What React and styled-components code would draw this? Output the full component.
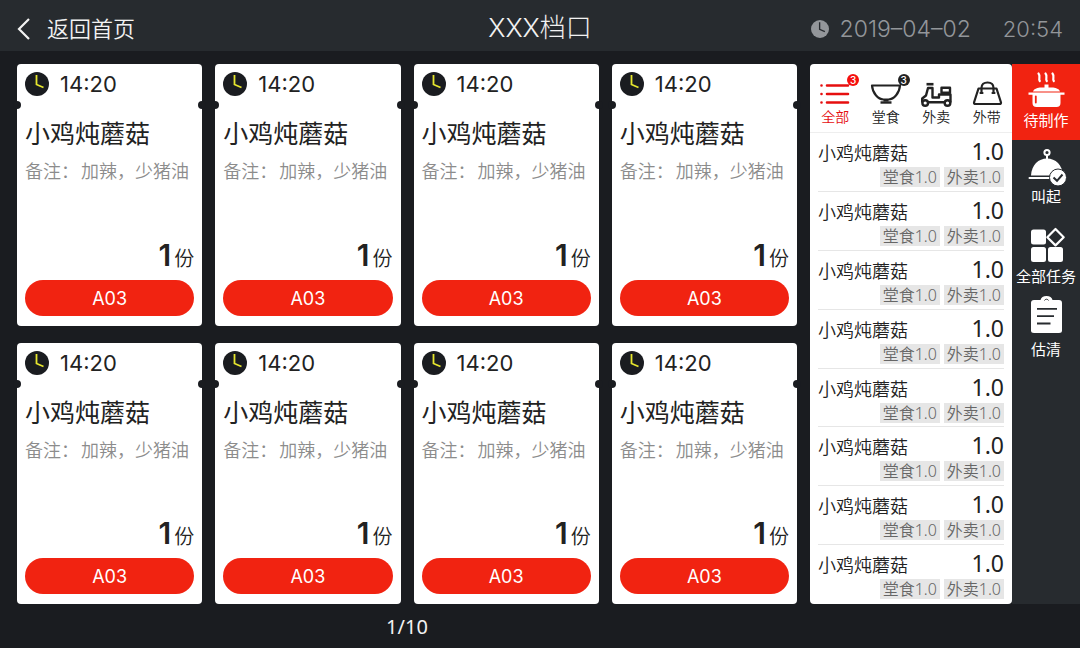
import React from "react";
import styled, { createGlobalStyle } from "styled-components";

const orders = Array.from({ length: 8 }, (_, i) => ({
  id: i,
  time: "14:20",
  dish: "小鸡炖蘑菇",
  remark: "加辣，少猪油",
  count: 1,
  table: "A03",
}));

const summary = Array.from({ length: 8 }, (_, i) => ({
  id: i,
  dish: "小鸡炖蘑菇",
  total: "1.0",
  tags: ["堂食1.0", "外卖1.0"],
}));

const ListIcon = () => (
  <svg width="34" height="28" viewBox="0 0 34 28" stroke="currentColor" strokeWidth="2.6" strokeLinecap="round">
    <path d="M9 5.5H30M9 14H30M9 22.5H30" />
    <path d="M3.5 5.5h.01M3.5 14h.01M3.5 22.5h.01" />
  </svg>
);

const BowlIcon = () => (
  <svg width="34" height="28" viewBox="0 0 34 28" fill="none" stroke="currentColor" strokeWidth="2.2">
    <path d="M3 5.5H31C30.5 13 25 19.5 19.5 19.5H14.5C9 19.5 3.5 13 3 5.5Z" strokeLinejoin="round" />
    <path d="M14.5 20.5h5" />
    <path d="M11.5 22.5h11" strokeWidth="2.4" />
  </svg>
);

const ScooterIcon = () => (
  <svg width="34" height="28" viewBox="0 0 34 28" fill="none" stroke="currentColor" strokeWidth="2.4" strokeLinejoin="round">
    <path d="M7.5 4.2h7" strokeWidth="2.6" />
    <path d="M9 22.3H25.5M3.2 22.5V18.5L7 15.5L9 8H13.5V17.5H20V14.5H31.5V22.5" />
    <path d="M22.5 7.8h8.5v5h-8.5z" />
    <circle cx="6.2" cy="23" r="2.8" fill="#fff" />
    <circle cx="28.5" cy="23" r="2.8" fill="#fff" />
  </svg>
);

const BagIcon = () => (
  <svg width="34" height="28" viewBox="0 0 34 28" fill="none" stroke="currentColor" strokeWidth="2.2" strokeLinejoin="round" strokeLinecap="round">
    <path d="M8.5 8.5H26.5L31 22.5Q31 24 29.5 24H5.5Q4 24 4 22.5Z" />
    <path d="M11.5 13V8C11.5 4.5 14 2.5 17.5 2.5S23.5 4.5 23.5 8V13" />
    <path d="M10.5 13h2M22.5 13h2" />
  </svg>
);

const PotIcon = () => (
  <svg width="44" height="47" viewBox="0 0 44 47" fill="currentColor">
    <g fill="none" stroke="currentColor" strokeWidth="2.2" strokeLinecap="round">
      <path d="M14.500 9.500c2.500 3-.5 5 1.300 7.500M21.500 9.500c2.500 3-.5 5 1.300 7.500M28.500 9.500c2.500 3-.5 5 1.300 7.500" />
    </g>
    <path d="M20.5 20.5h4v3.5h-4z" />
    <path d="M9 27.500c1-3 5-4 8-4h11c3 0 7 1 8 4z" />
    <path d="M4.500 28.500h36v2.200h-4V39q0 4-4 4h-20q-4 0-4-4v-8.300h-4z" />
    <path d="M11.800 32.500v6" stroke="#f12311" strokeWidth="1.8" strokeLinecap="round" />
  </svg>
);

const ClocheIcon = () => (
  <svg width="44" height="47" viewBox="0 0 44 47" fill="none" stroke="currentColor" strokeWidth="2">
    <circle cx="23" cy="12.5" r="2.6" />
    <path d="M23 15v4" />
    <path d="M7 35.5C7.500 25 14.500 18.500 23 18.500S38.500 25 39 35.500z" fill="currentColor" stroke="none" />
    <path d="M5.5 38h24" strokeLinecap="round" />
    <circle cx="34" cy="37.5" r="8.5" fill="currentColor" stroke="#272b2f" strokeWidth="1" />
    <path d="M29.500 37.500l3.500 3.300 5.500-6.300" stroke="#272b2f" />
  </svg>
);

const TasksIcon = () => (
  <svg width="44" height="51" viewBox="0 0 44 51" fill="currentColor">
    <rect x="7" y="13.5" width="15" height="15" rx="2.5" />
    <rect x="7" y="31" width="15" height="15" rx="2.5" />
    <rect x="24" y="31" width="15" height="15" rx="2.5" />
    <path d="M31.500 13l8.200 8.200-8.200 8.200-8.200-8.200z" fill="none" stroke="currentColor" strokeWidth="2.2" strokeLinejoin="round" />
  </svg>
);

const ClipboardIcon = () => (
  <svg width="44" height="44" viewBox="0 0 44 44" fill="currentColor">
    <path d="M10 4h6.500q1-4 6-4t6 4H35q3 0 3 3v27.500q0 2.500-3 2.500H10q-3 0-3-2.500V7q0-3 3-3z" />
    <path d="M20.500 4.500a2.200 2.200 0 0 1 4 0" fill="none" stroke="#272b2f" />
    <path d="M13 12.800h20M13 20.200h17M13 27.500h13.500" stroke="#272b2f" strokeWidth="1.8" />
  </svg>
);

const ClockIcon = ({ size, face, hands }) => (
  <svg width={size} height={size} viewBox="0 0 24 24">
    <circle cx="12" cy="12" r="12" fill={face} />
    <path d="M11.5 3V12.5L18.5 15.5" fill="none" stroke={hands} strokeWidth="1.8" />
  </svg>
);

const tabs = [
  { name: "全部", Icon: ListIcon, badge: 3, active: true },
  { name: "堂食", Icon: BowlIcon, badge: 3 },
  { name: "外卖", Icon: ScooterIcon },
  { name: "外带", Icon: BagIcon },
];

const menus = [
  { name: "待制作", Icon: PotIcon, active: true },
  { name: "叫起", Icon: ClocheIcon },
  { name: "全部任务", Icon: TasksIcon },
  { name: "估清", Icon: ClipboardIcon },
];

const OrderCard = ({ order }) => (
  <Card>
    <TimeRow>
      <ClockIcon size={24} face="#1a1c20" hands="#e6e62e" />
      <time>{order.time}</time>
    </TimeRow>
    <Dish>{order.dish}</Dish>
    <Remark>
      <span>备注：</span>
      <span>{order.remark}</span>
    </Remark>
    <Amount>
      <Count>{order.count}</Count>份
    </Amount>
    <TableButton type="button">{order.table}</TableButton>
  </Card>
);

const App = () => (
  <Page>
    <GlobalStyle />
    <Header>
      <BackLink href="#home">
        <svg width="14" height="22" viewBox="0 0 14 22" fill="none" stroke="currentColor" strokeWidth="2.2">
          <path d="M12 1L2 11L12 21" />
        </svg>
        返回首页
      </BackLink>
      <Title>XXX档口</Title>
      <DateTime>
        <ClockIcon size={18} face="#93969a" hands="#272b2f" />
        <span>2019–04–02</span>
        <Now>20:54</Now>
      </DateTime>
    </Header>
    <Main>
      <CardGrid>
        {orders.map((order) => (
          <OrderCard key={order.id} order={order} />
        ))}
      </CardGrid>
      <Summary>
        <Tabs>
          {tabs.map(({ name, Icon, badge, active }) => (
            <Tab key={name} type="button" $active={active}>
              <TabIcon>
                <Icon />
                {badge && <Badge $active={active}>{badge}</Badge>}
              </TabIcon>
              {name}
            </Tab>
          ))}
        </Tabs>
        <SummaryList>
          {summary.map((item) => (
            <SummaryItem key={item.id}>
              <SummaryTop>
                <span>{item.dish}</span>
                <Total>{item.total}</Total>
              </SummaryTop>
              <TagRow>
                {item.tags.map((tag) => (
                  <Tag key={tag}>{tag}</Tag>
                ))}
              </TagRow>
            </SummaryItem>
          ))}
        </SummaryList>
      </Summary>
      <Menu>
        {menus.map(({ name, Icon, active }) => (
          <MenuButton key={name} type="button" $active={active}>
            <Icon />
            {name}
          </MenuButton>
        ))}
      </Menu>
      <Pager>1/10</Pager>
    </Main>
  </Page>
);

const GlobalStyle = createGlobalStyle`
  * {
    box-sizing: border-box;
  }

  body {
    margin: 0;
    background-color: #1a1c20;
    font-family: Inter, "Noto Sans CJK SC", sans-serif;
  }

  button {
    border: 0;
    padding: 0;
    font-family: inherit;
    cursor: pointer;
  }

  svg {
    display: block;
    flex-shrink: 0;
  }
`;

const Page = styled.div`
  min-height: 100vh;
  display: flex;
  flex-direction: column;
`;

const Header = styled.header`
  display: grid;
  grid-template-columns: 1fr auto 1fr;
  align-items: center;
  height: 51px;
  padding: 4px 17px 0;
  background-color: #272b2f;
  color: #f2f2f2;
`;

const BackLink = styled.a`
  display: flex;
  align-items: center;
  gap: 16px;
  padding-top: 2px;
  font-size: 22px;
  font-weight: 350;
  line-height: 32px;
  color: inherit;
  text-decoration: none;
`;

const Title = styled.h1`
  margin: 0;
  font-size: 26px;
  font-weight: 300;
  line-height: 36px;
`;

const DateTime = styled.div`
  display: flex;
  align-items: center;
  justify-content: flex-end;
  gap: 11px;
  padding-top: 2px;
  font-size: 23px;
  font-weight: 300;
  line-height: 32px;
  color: #93969a;
`;

const Now = styled.time`
  margin-left: 21px;
  font-size: 22px;
`;

const Main = styled.main`
  flex: 1;
  display: grid;
  grid-template-columns: 1fr 202px 68px;
  grid-template-rows: 1fr 44px;
  padding: 13px 0 0 17px;
`;

const CardGrid = styled.section`
  display: grid;
  grid-template-columns: repeat(4, 1fr);
  grid-auto-rows: 1fr;
  gap: 17px 13px;
  margin-right: 13px;
`;

const Card = styled.article`
  position: relative;
  display: flex;
  flex-direction: column;
  padding: 4px 8px 10px;
  border-radius: 4px;
  background-color: #fff;
  color: #222;

  &::before,
  &::after {
    content: "";
    position: absolute;
    top: 37px;
    width: 8px;
    height: 8px;
    border-radius: 50%;
    background-color: #1a1c20;
  }

  &::before {
    left: -4px;
  }

  &::after {
    right: -4px;
  }
`;

const TimeRow = styled.div`
  display: flex;
  align-items: center;
  gap: 11px;
  height: 32px;
  font-size: 22px;
`;

const Dish = styled.h2`
  margin: 16px 0 0;
  font-size: 25px;
  font-weight: 400;
  line-height: 36px;
`;

const Remark = styled.p`
  display: flex;
  gap: 2px;
  margin: 7px 0 0;
  font-size: 18px;
  font-weight: 350;
  line-height: 26px;
  color: #8c8c8c;
  white-space: nowrap;
`;

const Amount = styled.div`
  display: flex;
  align-items: baseline;
  justify-content: flex-end;
  gap: 3px;
  margin-top: auto;
  font-size: 20px;
  font-weight: 350;
  line-height: 36px;
`;

const Count = styled.strong`
  font-size: 30px;
  font-weight: 600;
`;

const TableButton = styled.button`
  height: 36px;
  margin-top: 3px;
  padding-top: 1px;
  border-radius: 18px;
  background-color: #f12311;
  color: #fff;
  font-size: 18px;
`;

const Summary = styled.section`
  display: flex;
  flex-direction: column;
  border-radius: 4px;
  background-color: #fff;
  color: #222;
  font-family: "Noto Sans", "Noto Sans CJK SC", sans-serif;
`;

const Tabs = styled.div`
  display: grid;
  grid-template-columns: repeat(4, 1fr);
  height: 69px;
  border-bottom: 1px solid #eee;
`;

const Tab = styled.button`
  display: flex;
  flex-direction: column;
  align-items: center;
  padding-top: 16px;
  background: none;
  font-size: 14px;
  font-weight: 350;
  line-height: 18px;
  color: ${({ $active }) => ($active ? "#e60f0f" : "#222")};
`;

const TabIcon = styled.span`
  position: relative;
`;

const Badge = styled.span`
  position: absolute;
  top: -6px;
  left: 29px;
  width: 12px;
  height: 12px;
  border-radius: 50%;
  background-color: ${({ $active }) => ($active ? "#f5100f" : "#222")};
  color: #fff;
  font-family: Inter, sans-serif;
  font-size: 10px;
  font-weight: 500;
  line-height: 12px;
  text-align: center;
`;

const SummaryList = styled.ul`
  flex: 1;
  display: grid;
  grid-auto-rows: 1fr;
  margin: 0;
  padding: 0 8px;
  list-style: none;
`;

const SummaryItem = styled.li`
  padding-top: 6px;
  border-bottom: 1px solid #e6e6e6;

  &:last-child {
    border-bottom: 0;
  }
`;

const SummaryTop = styled.div`
  display: flex;
  align-items: flex-start;
  justify-content: space-between;
  height: 28px;
  font-size: 18px;
  font-weight: 350;
  line-height: 28px;
`;

const Total = styled.span`
  font-size: 23px;
  font-weight: 400;
  line-height: 24px;
`;

const TagRow = styled.div`
  display: flex;
  justify-content: flex-end;
  gap: 4px;
`;

const Tag = styled.span`
  padding: 0 3px;
  background-color: #e6e6e6;
  color: #666;
  font-size: 16px;
  font-weight: 350;
  line-height: 20px;
`;

const Menu = styled.nav`
  display: flex;
  flex-direction: column;
  background-color: #272b2f;
`;

const MenuButton = styled.button`
  display: flex;
  flex-direction: column;
  align-items: center;
  padding-bottom: 9px;
  background-color: ${({ $active }) => ($active ? "#f12311" : "transparent")};
  color: #fff;
  font-size: 15px;
  line-height: 20px;
`;

const Pager = styled.footer`
  display: flex;
  align-items: center;
  justify-content: center;
  margin-right: 13px;
  font-family: "Noto Sans", sans-serif;
  font-size: 20px;
  color: #f2f2f2;
`;

export default App;
